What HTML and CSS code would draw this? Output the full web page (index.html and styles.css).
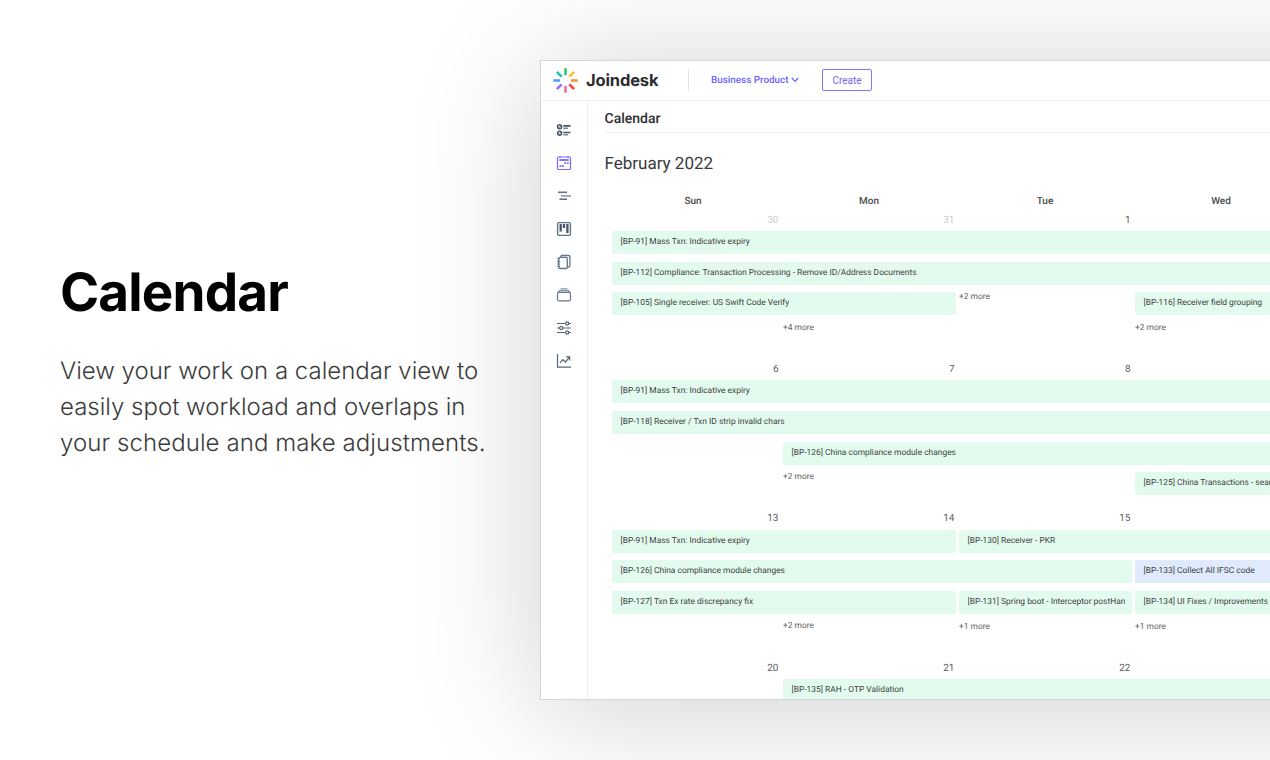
FILE: index.html
```
<!DOCTYPE html>
<html lang="en">
<head>
<meta charset="utf-8">
<title>Joindesk Calendar</title>
<link rel="stylesheet" href="styles.css">
</head>
<body>
<main class="slide">
  <section class="intro">
    <h1 class="intro-title">Calendar</h1>
    <p class="intro-text"><span class="line l1">View your work on a calendar view to</span><span class="line l2">easily spot workload and overlaps in</span><span class="line l3">your schedule and make adjustments.</span></p>
  </section>
  <section class="window">
    <header class="topbar">
      <svg class="logo" viewBox="0 0 24 24" fill="none" stroke-width="2.5">
        <path stroke="#2fc46b" d="M12 .3v6.500"/><path stroke="#f2c63c" d="M20.300 3.700l-4.600 4.600"/><path stroke="#fb9039" d="M23.700 12h-6.500"/><path stroke="#ee4444" d="M20.300 20.300l-4.600-4.600"/><path stroke="#f768b4" d="M12 23.700v-6.500"/><path stroke="#9a6cf7" d="M3.700 20.300l4.600-4.600"/><path stroke="#4da3f7" d="M.3 12h6.500"/><path stroke="#25bfc4" d="M3.700 3.700l4.600 4.600"/>
      </svg>
      <span class="brand">Joindesk</span>
      <span class="divider"></span>
      <span class="project">Business Product</span>
      <svg class="chevron" viewBox="0 0 8 6" fill="none" stroke="#6c63ff" stroke-width="1.3"><path d="M.8 1L4 4.4 7.2 1"/></svg>
      <button class="create">Create</button>
    </header>
    <div class="body">
      <nav class="sidebar">
        <svg class="icon" viewBox="0 0 16 16" fill="none" stroke="#475569"><circle cx="3.600" cy="4.700" r="2" stroke-width="1.5"/><circle cx="3.600" cy="11.300" r="2" stroke-width="1.5"/><path d="M2.6 4.700l.8.8L5 3.600M2.6 11.300l.8.8L5 10.200" stroke-width=".8"/><path d="M7.300 3.900H14.500M7.300 10.500H14.500" stroke-width="1.700"/><path d="M7.300 6.200H12M7.300 12.800H12" stroke="#7b8796" stroke-width="1.400"/></svg>
        <svg class="icon" viewBox="0 0 16 16" fill="none" stroke="#7468ff"><rect x="1.500" y="2" width="13" height="12.500" rx="1.300" stroke-width="1.200"/><path d="M4 .8V3M12 .8V3"/><path d="M3.300 5h9.400" stroke-width="1.800"/><path d="M8.300 8.200h1.700M11 8.200h1.700M3.500 11H5.200M6 11h1.700" stroke-width="1.800"/></svg>
        <svg class="icon" viewBox="0 0 16 16" fill="none" stroke="#64748b" stroke-width="1.600"><path d="M2 4.300h9"/><path d="M5 7.900h10" stroke="#8f9bab" /><path d="M3.500 11.200h7.500"/></svg>
        <svg class="icon" viewBox="0 0 16 16" fill="none" stroke="#475569"><rect x="1.600" y="1.600" width="12.800" height="12.800" rx="1.500" stroke="#64748b" stroke-width="1.400"/><path d="M4.700 3v7.500M8 3v4M11.400 3v9" stroke-width="2.300"/></svg>
        <svg class="icon" viewBox="0 0 16 16" fill="none" stroke="#64748b" stroke-width="1.300"><rect x="2.800" y="3.300" width="8.500" height="11.200" rx="1.300"/><path d="M4.500 2.800L5.500 1.500H12.500q1.400 0 1.400 1V12l-2 1.500"/><path d="M1.200 5h2.700M1.200 7.500h2.700M1.200 10h2.700M1.200 12.500h2.700" stroke-width="1"/></svg>
        <svg class="icon" viewBox="0 0 16 16" fill="none" stroke="#64748b" stroke-width="1.200"><rect x="1.500" y="5.500" width="13" height="8.300" rx="1.200"/><path d="M3 3.800h10M4.500 1.900h7" stroke="#8490a1" stroke-width="1.400"/><path d="M2 5.700l1.200-2M14 5.700l-1.200-2"/></svg>
        <svg class="icon" viewBox="0 0 16 16" fill="none" stroke="#56657a" stroke-width="1.200"><path d="M1 3.500h8.500M13 3.500h2M1 8h2.500M7 8h8M1 12.500h8.500M13 12.500h2"/><circle cx="11.200" cy="3.500" r="1.600"/><circle cx="5.200" cy="8" r="1.600"/><circle cx="11.200" cy="12.500" r="1.600"/></svg>
        <svg class="icon" viewBox="0 0 16 16" fill="none" stroke="#56657a" stroke-width="1.200"><path d="M1.500 1v13.200H15"/><path d="M4 9.800L7 6.500l2.500 2.500L13.500 4.200M10 3.900h3.700v3.700"/></svg>
      </nav>
      <div class="content">
        <h2 class="page-title">Calendar</h2>
        <div class="month">February 2022</div>
        <div class="days"><span>Sun</span><span>Mon</span><span>Tue</span><span>Wed</span></div>

        <div class="week">
          <span class="date c1 muted">30</span><span class="date c2 muted">31</span><span class="date c3">1</span>
          <div class="event r1 c1 to-end first">[BP-91] Mass Txn: Indicative expiry</div>
          <div class="event r2 c1 to-end first">[BP-112] Compliance: Transaction Processing - Remove ID/Address Documents</div>
          <div class="event r3 c1 span2 first">[BP-105] Single receiver: US Swift Code Verify</div>
          <span class="more r3 c3">+2 more</span>
          <div class="event r3 c4 to-end">[BP-116] Receiver field grouping</div>
          <span class="more r4 c2">+4 more</span><span class="more r4 c4">+2 more</span>
        </div>

        <div class="week">
          <span class="date c1">6</span><span class="date c2">7</span><span class="date c3">8</span>
          <div class="event r1 c1 to-end first">[BP-91] Mass Txn: Indicative expiry</div>
          <div class="event r2 c1 to-end first">[BP-118] Receiver / Txn ID strip invalid chars</div>
          <div class="event r3 c2 to-end">[BP-126] China compliance module changes</div>
          <span class="more r4 c2">+2 more</span>
          <div class="event r4 c4 to-end">[BP-125] China Transactions - search</div>
        </div>

        <div class="week">
          <span class="date c1">13</span><span class="date c2">14</span><span class="date c3">15</span>
          <div class="event r1 c1 span2 first">[BP-91] Mass Txn: Indicative expiry</div>
          <div class="event r1 c3 to-end">[BP-130] Receiver - PKR</div>
          <div class="event r2 c1 span3 first">[BP-126] China compliance module changes</div>
          <div class="event r2 c4 to-end blue">[BP-133] Collect All IFSC code</div>
          <div class="event r3 c1 span2 first">[BP-127] Txn Ex rate discrepancy fix</div>
          <div class="event r3 c3"><span class="clip">[BP-131] Spring boot - Interceptor postHan</span></div>
          <div class="event r3 c4 to-end">[BP-134] UI Fixes / Improvements</div>
          <span class="more r4 c2">+2 more</span><span class="more r4 c3 low">+1 more</span><span class="more r4 c4 low">+1 more</span>
        </div>

        <div class="week">
          <span class="date c1">20</span><span class="date c2">21</span><span class="date c3">22</span>
          <div class="event r1 c2 to-end">[BP-135] RAH - OTP Validation</div>
        </div>
      </div>
    </div>
  </section>
</main>
</body>
</html>
```
FILE: styles.css
```
* { box-sizing: border-box; }
body { margin: 0; background: #fff; font-family: Roboto, sans-serif; text-rendering: geometricPrecision; }
.slide { display: flex; align-items: flex-start; width: 1270px; height: 760px; padding-top: 60px; overflow: hidden; }
.intro { flex: none; width: 540px; padding: 197px 0 0 60px; font-family: Inter, sans-serif; }
.intro-title { margin: 0; font-size: 53px; line-height: 70px; font-weight: 700; letter-spacing: -0.85px; color: #000; }
.intro-text { margin: 26px 0 0; font-size: 24px; line-height: 36px; color: #3c3c3c; font-weight: 300; }
.line { display: block; white-space: nowrap; }
.l3 { letter-spacing: 0.08px; }
.window { flex: none; width: 900px; height: 640px; border: 1px solid #d6d6d6; background: #fff; box-shadow: 0 10px 120px rgba(0, 0, 0, 0.19); overflow: hidden; }
.topbar { display: flex; align-items: center; height: 40px; padding: 0 0 1px 12px; border-bottom: 1px solid #f0f0f2; }
.logo { width: 25px; height: 25px; }
.brand { margin-left: 8px; width: 73px; font: 700 16.500px/24px Inter, sans-serif; letter-spacing: -0.15px; color: #2b2b2f; }
.divider { width: 1px; height: 22px; margin: 0 22px 0 29px; background: #e4e4e8; }
.project { width: 78px; padding-top: 1px; font-size: 9.900px; font-weight: 500; color: #6c63ff; white-space: nowrap; }
.chevron { width: 8px; height: 6px; margin-left: 2px; }
.create { width: 50px; height: 22px; margin-left: 23px; padding: 1px 0 0; border: 1px solid #8078ff; border-radius: 2px; background: #fff; font: 400 10px/19px Roboto, sans-serif; color: #7068f5; }
.body { display: flex; height: 600px; }
.sidebar { flex: none; display: flex; flex-direction: column; gap: 17px; width: 47px; padding: 21px 0 0 15px; border-right: 1px solid #f0f0f2; }
.icon { flex: none; width: 16px; height: 16px; }
.content { flex: 1; padding-left: 16.500px; }
.page-title { margin: 0; height: 32px; border-bottom: 1px solid #f0f0f2; font-size: 14px; line-height: 37px; font-weight: 500; color: #2d2d30; }
.month { padding-top: 19px; font-size: 17px; line-height: 24px; color: #3a3a3a; }
.days { display: grid; grid-template-columns: repeat(4, 176px); height: 33.500px; padding: 18px 0 0 0.500px; text-align: center; font-size: 10px; line-height: 15px; font-weight: 500; color: #4a4a4a; }
.week { display: grid; grid-template-columns: repeat(4, 176px) 1fr; grid-template-rows: 21.5px repeat(4, 30.6px); height: 149.35px; padding-left: 0.500px; }
.date { grid-row: 1; padding-right: 2.500px; text-align: right; font-size: 10px; line-height: 21px; color: #606060; }
.muted { color: #ccc; }
.event { height: 23px; margin: 0 1px 0 2px; padding-left: 8.500px; border-radius: 2px; background: #e3fbee; font-size: 8.420px; line-height: 23.500px; color: #3c3f40; white-space: nowrap; overflow: hidden; }
.blue { background: #dfeafd; }
.first { margin-left: 7px; border-radius: 0 2px 2px 0; }
.clip { display: block; width: 157px; overflow: hidden; }
.more { padding-left: 2px; font-size: 8.400px; line-height: 10px; color: #606060; }
.low { padding-top: 1px; }
.c1 { grid-column: 1; }
.c2 { grid-column: 2; }
.c3 { grid-column: 3; }
.c4 { grid-column: 4; }
.r1 { grid-row: 2; }
.r2 { grid-row: 3; }
.r3 { grid-row: 4; }
.r4 { grid-row: 5; }
.span2 { grid-column-end: span 2; }
.span3 { grid-column-end: span 3; }
.to-end { grid-column-end: -1; }
```
